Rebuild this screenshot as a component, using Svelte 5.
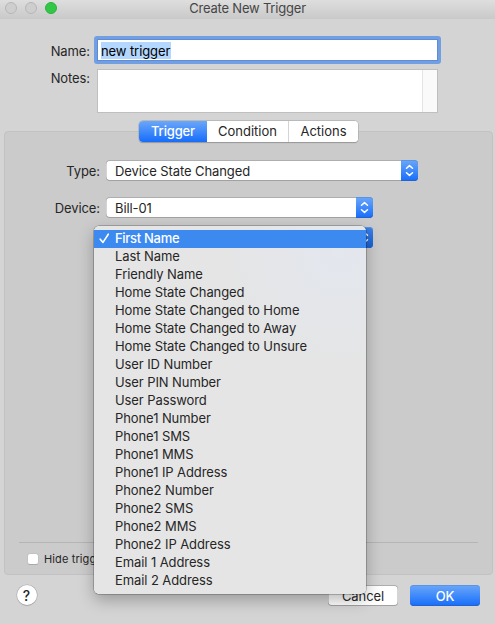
<script>
  const tabs = ['Trigger', 'Condition', 'Actions'];
  const options = [
    'First Name', 'Last Name', 'Friendly Name', 'Home State Changed',
    'Home State Changed to Home', 'Home State Changed to Away',
    'Home State Changed to Unsure', 'User ID Number', 'User PIN Number',
    'User Password', 'Phone1 Number', 'Phone1 SMS', 'Phone1 MMS',
    'Phone1 IP Address', 'Phone2 Number', 'Phone2 SMS', 'Phone2 MMS',
    'Phone2 IP Address', 'Email 1 Address', 'Email 2 Address'
  ];
  let active = $state('Trigger');
  let selected = $state('First Name');
</script>

{#snippet arrows()}
  <span class="arrows">
    <svg width="9" height="13" viewBox="0 0 9 13" fill="none" stroke="#fff" stroke-width="1.5" stroke-linecap="round" stroke-linejoin="round">
      <path d="M1.5 4.3 4.5 1.6l3 2.7M1.5 8.7l3 2.7 3-2.7" />
    </svg>
  </span>
{/snippet}

<div class="window">
  <header class="titlebar">
    <div class="lights"><i></i><i></i><i class="zoom"></i></div>
    <h1>Create New Trigger</h1>
  </header>

  <div class="field name-row">
    <span class="label">Name:</span>
    <div class="name-input"><span class="mark">new trigger</span></div>
  </div>
  <div class="field notes-row">
    <span class="label">Notes:</span>
    <div class="notes"><span class="scroller"></span></div>
  </div>

  <section class="panel">
    <div class="tabs">
      {#each tabs as tab}
        <button class:active={tab === active} onclick={() => (active = tab)}>{tab}</button>
      {/each}
    </div>

    <div class="row">
      <span class="label">Type:</span>
      <div class="select wide"><span>Device State Changed</span>{@render arrows()}</div>
    </div>
    <div class="row device">
      <span class="label">Device:</span>
      <div class="select"><span>Bill-01</span>{@render arrows()}</div>
    </div>
    <div class="row state">
      <span class="label"></span>
      <div class="select"><span></span>{@render arrows()}
        <ul class="menu">
          {#each options as option}
            <li class:selected={option === selected}>
              {#if option === selected}
                <svg class="check" width="11" height="11" viewBox="0 0 11 11" fill="none" stroke="#fff" stroke-width="1.6" stroke-linecap="round" stroke-linejoin="round">
                  <path d="M1.2 6.2 4 9.4 9.3 1.2" />
                </svg>
              {/if}
              <span>{option}</span>
            </li>
          {/each}
        </ul>
      </div>
    </div>

    <div class="hide">
      <span class="box"></span><span class="hide-text">Hide trigger</span>
    </div>
  </section>

  <footer>
    <button class="help">?</button>
    <button class="push cancel">Cancel</button>
    <button class="push ok">OK</button>
  </footer>
</div>

<style>
  .window {
    width: 495px;
    height: 624px;
    display: flex;
    flex-direction: column;
    overflow: hidden;
    background: #d4d4d4;
    color: #262626;
    font: 13px/18px Inter, 'Liberation Sans', sans-serif;
    letter-spacing: -0.09px;
  }
  .window * { box-sizing: border-box; }
  button { font: inherit; letter-spacing: inherit; color: inherit; border: 0; padding: 0; }
  .titlebar {
    flex: none;
    height: 19px;
    display: flex;
    background: linear-gradient(#dedede, #c9c9c9);
  }
  .lights { display: flex; gap: 8px; padding: 2px 0 0 5px; width: 85px; }
  .lights i { width: 12px; height: 12px; border-radius: 50%; border: 1px solid #b7b7b7; background: #cecece; }
  .lights .zoom { background: #33c748; border-color: #2bb33c; }
  h1 { margin: 0; width: 325px; text-align: center; font-size: 13px; font-weight: 400; line-height: 17px; letter-spacing: -0.2px; color: #464646; }
  .field { display: flex; flex: none; }
  .field .label { width: 90px; text-align: right; }
  .name-row { padding-top: 17px; height: 45px; }
  .name-row .label { padding-top: 6px; }
  .name-input {
    margin-left: 4px;
    width: 347px;
    height: 28px;
    border: 3px solid #729fe2;
    border-radius: 3px;
    background: #fff;
    box-shadow: inset 0 0 0 1px #5d8bd5;
    padding: 3px 0 0 4px;
    color: #000;
  }
  .mark { display: inline-block; width: 70px; height: 17px; line-height: 18px; background: #b3d7ff; white-space: nowrap; }
  .notes-row { padding-top: 5px; height: 57px; }
  .notes-row .label { padding-top: 0; }
  .notes { margin-left: 7px; width: 341px; height: 44px; display: flex; justify-content: flex-end; background: #fff; border: 1px solid #bfbfbf; }
  .scroller { width: 15px; border-left: 1px solid #e4e4e4; background: #fafafa; }
  .panel {
    flex: none;
    width: 489px;
    height: 444px;
    margin: 10px 0 0 4px;
    border: 1px solid #c2c2c2;
    border-radius: 4px;
    background: #cbcbcb;
    display: flex;
    flex-direction: column;
  }
  .tabs {
    flex: none;
    width: 219px;
    height: 21px;
    margin: -11px 0 0 134px;
    display: flex;
    border-radius: 4px;
    overflow: hidden;
    background: #fff;
    box-shadow: 0 0 0 0.5px #a6a6a6, 0 0.5px 1px #8a8a8a;
  }
  .tabs button { width: 70px; padding-bottom: 1px; background: #fff; line-height: 19px; letter-spacing: 0; border-left: 1px solid #d4d4d4; }
  .tabs button:nth-child(2) { width: 81px; border-left: 0; }
  .tabs button.active { width: 68px; border: 0; color: #fff; font-weight: 500; letter-spacing: -0.15px; background: linear-gradient(#6ba7f9, #166dfb); }
  .row { display: flex; flex: none; height: 21px; margin-top: 18px; }
  .row.device { margin-top: 16px; }
  .row.state { margin-top: 9px; }
  .row .label { width: 95px; text-align: right; line-height: 23px; }
  .select {
    position: relative;
    width: 267px;
    height: 21px;
    margin-left: 6px;
    padding-left: 9px;
    display: flex;
    justify-content: space-between;
    line-height: 23px;
    background: #fff;
    border-radius: 4px;
    box-shadow: inset 0 0 0 0.5px #aaa, inset 0 -1px 0 #999, inset 0 1px 0 #b3b3b3;
  }
  .select.wide { width: 312px; }
  .arrows {
    width: 17px;
    height: 21px;
    display: flex;
    align-items: center;
    justify-content: center;
    border-radius: 0 4px 4px 0;
    background: linear-gradient(#6ba7f9, #166dfb);
    box-shadow: inset 0 -1px #2562cc, inset 0 1px #5c94e5;
  }
  .state .arrows { background: linear-gradient(#3d82e8, #1660d6); }
  .menu {
    position: absolute;
    left: -12px;
    top: -1px;
    width: 272px;
    height: 368px;
    margin: 0;
    padding: 4px 0;
    list-style: none;
    line-height: 16px;
    border-radius: 5px;
    background: radial-gradient(circle at 90% 7%, #e3e7ee 0, #e5e5e5 120px);
    box-shadow: 0 0 0 0.5px rgba(0, 0, 0, 0.4), 0 6px 16px rgba(0, 0, 0, 0.28);
  }
  .menu li { height: 18px; padding-left: 21px; display: flex; position: relative; }
  .menu .selected { background: #3c8af0; color: #fff; font-weight: 500; letter-spacing: -0.3px; }
  .check { position: absolute; left: 5px; top: 3px; }
  .hide {
    display: flex;
    margin: auto 14px 0;
    height: 32px;
    padding: 10px 0 0 8px;
    border-top: 1px solid #b5b5b5;
    font-size: 11px;
    letter-spacing: 0.12px;
  }
  .box { width: 12px; height: 12px; border-radius: 3px; background: #fff; border: 1px solid #c2c2c2; border-bottom-color: #aaa; }
  .hide-text { margin-left: 5px; line-height: 12px; white-space: nowrap; }
  footer { display: flex; padding: 10px 0 0 16.5px; }
  .help { width: 20px; height: 20px; border-radius: 50%; background: #fff; box-shadow: 0 0 0 0.5px #aaa, 0 0.5px 1px #888; font-size: 14px; font-weight: 500; line-height: 19px; }
  .push { width: 70px; height: 21px; border-radius: 4px; line-height: 20px; }
  .cancel { margin-left: 291.5px; background: #fff; box-shadow: inset 0 0 0 0.5px #aaa, inset 0 -1px #999, inset 0 1px #b3b3b3; }
  .ok { margin-left: 12px; color: #fff; font-weight: 500; background: linear-gradient(#6ba7f9, #166dfb); box-shadow: inset 0 -1px #2562cc, inset 0 1px #5c94e5; }
</style>
